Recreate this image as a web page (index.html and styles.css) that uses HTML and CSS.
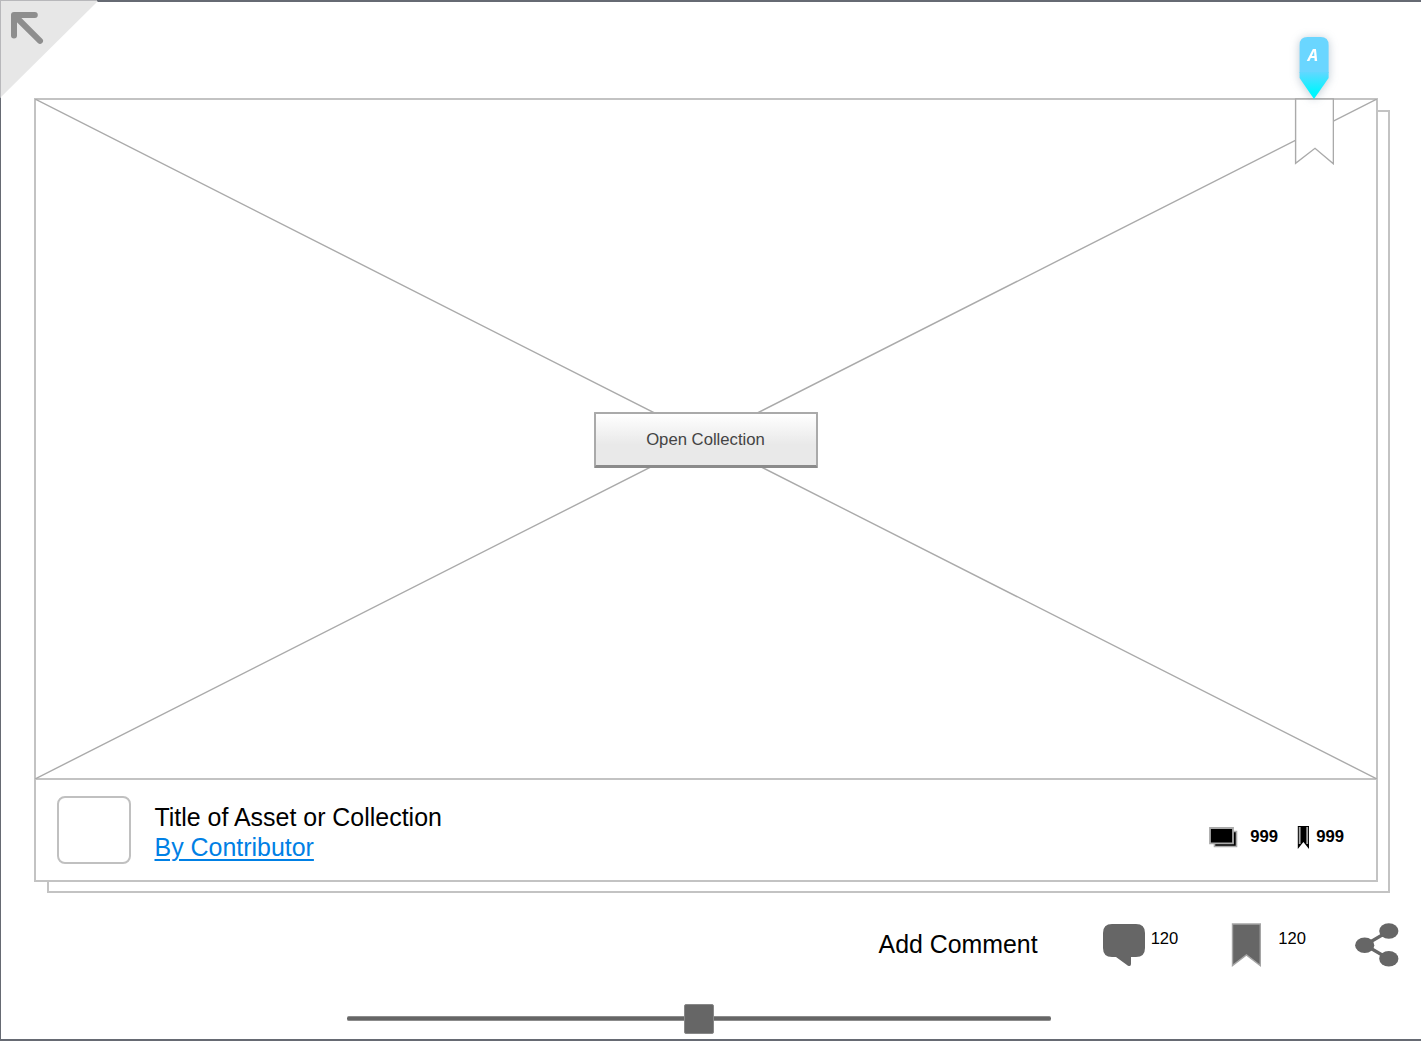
FILE: index.html
```html
<!DOCTYPE html>
<html lang="en">
<head>
  <meta charset="UTF-8">
  <meta name="viewport" content="width=device-width, initial-scale=1.0">
  <title>Collection</title>
  <link rel="stylesheet" href="styles.css">
</head>
<body>
  <div class="page">
    <a class="corner" href="#" aria-label="Back">
      <svg width="98" height="98" viewBox="0 0 98 98">
        <path d="M0 1H98L0 98Z" fill="#e7e7e7"/>
        <path d="M0 .5H97M.5 0V97" stroke="#b8b8bb" fill="none"/>
        <path d="M34.8 15H14V35.5M15 16L40 40.8" stroke="#8e8e8e" stroke-width="6" stroke-linecap="round" stroke-linejoin="round" fill="none"/>
      </svg>
    </a>

    <div class="stack">
      <div class="card">
        <div class="media">
          <svg class="cross" viewBox="0 0 1342 680" preserveAspectRatio="none">
            <path d="M0 0L1342 680M0 680L1342 0"/>
          </svg>
          <button>Open Collection</button>
          <svg class="ribbon" width="40" height="67" viewBox="0 0 40 67">
            <path d="M1.6 1H39.4V65.8L21 50.3L1.6 65.3Z" fill="#fff" stroke="#aaa" stroke-width="1.4"/>
          </svg>
          <div class="pin">
            <svg width="30" height="62" viewBox="0 0 30 62">
              <defs>
                <linearGradient id="tip" x1="0" y1="0" x2="0" y2="1">
                  <stop offset="0" stop-color="#62d8ff"/>
                  <stop offset=".75" stop-color="#00f6ff"/>
                </linearGradient>
              </defs>
              <path d="M.6 8Q.6 0 8.6 0H21.6Q29.6 0 29.6 8V36H.6Z" fill="#6ad6ff"/>
              <path d="M.6 35H29.6V41L15 62L.6 41Z" fill="url(#tip)"/>
            </svg>
            <span>A</span>
          </div>
        </div>

        <div class="info">
          <div class="thumb"></div>
          <div class="titles">
            <div class="title">Title of Asset or Collection</div>
            <a class="by" href="#">By Contributor</a>
          </div>
          <div class="stats">
            <svg width="29" height="21" viewBox="0 0 29 21">
              <path d="M5.5 4.5H27.5V19.5H5.5Z" fill="#000" stroke="#aaa" stroke-width="1.6"/>
              <path d="M1 1H24V16.3H1Z" fill="#000" stroke="#aaa" stroke-width="1.8"/>
            </svg>
            <span class="items">999</span>
            <svg width="12" height="23" viewBox="0 0 12 23">
              <path d="M.8 0H12V23L6.4 16L.8 23Z" fill="#000"/>
              <path d="M2.7 1V18M10.2 1V18" stroke="#aaa" stroke-width="1.8"/>
            </svg>
            <span class="saves">999</span>
          </div>
        </div>
      </div>
    </div>

    <div class="actions">
      <span class="add">Add Comment</span>
      <svg class="comment" width="42" height="43" viewBox="0 0 42 43">
        <path d="M9 0H33Q42 0 42 9V24Q42 33 33 33H28V40Q28 43 25 41.7L13 33H9Q0 33 0 24V9Q0 0 9 0Z" fill="#666"/>
      </svg>
      <span class="count">120</span>
      <svg class="bookmark" width="30" height="45" viewBox="0 0 30 45">
        <path d="M1.5 1H29.3V42.5L15.4 32L1.5 42.5Z" fill="#666" stroke="#a5a5a5" stroke-width="1.4"/>
      </svg>
      <span class="count">120</span>
      <svg class="share" width="44" height="44" viewBox="0 0 44 44">
        <path d="M34 8L10 22L34 36" fill="none" stroke="#666" stroke-width="3.2"/>
        <g fill="#666">
          <ellipse cx="9.7" cy="22.2" rx="9.6" ry="7.7"/>
          <ellipse cx="33.8" cy="8" rx="9.6" ry="7.7"/>
          <ellipse cx="33.8" cy="35.8" rx="9.6" ry="7.7"/>
        </g>
      </svg>
    </div>

    <div class="slider">
      <div class="knob"></div>
    </div>
  </div>
</body>
</html>
```

FILE: styles.css
```css
* {
  box-sizing: border-box;
}
body {
  margin: 0;
  background: #fff;
  color: #000;
  font-family: "Liberation Sans", Arial, sans-serif;
  overflow: hidden;
}
svg {
  display: block;
  flex: none;
}
.page {
  position: relative;
  height: 1041px;
  padding: 96px 31px 0 33px;
  border: solid #666a73;
  border-width: 2px 0 2px 1px;
}
.corner {
  position: absolute;
  top: -2px;
  left: -1px;
}

/* card with a second one peeking out behind */
.stack {
  position: relative;
  height: 795px;
  padding-right: 12px;
}
.stack::before {
  content: "";
  position: absolute;
  top: 12px;
  left: 13px;
  right: 0;
  bottom: 0;
  border: 2px solid #c3c3c3;
}
.card {
  position: relative;
  height: 784px;
  background: #fff;
  border: 2px solid #c3c3c3;
}
.media {
  position: relative;
  display: flex;
  align-items: center;
  justify-content: center;
  height: 680px;
  border-bottom: 2px solid #c3c3c3;
}
.cross {
  position: absolute;
  top: -1px;
  left: -1px;
  width: 1342px;
  height: 680px;
}
.cross path {
  stroke: #aaa;
  stroke-width: 1.4;
}
button {
  position: relative;
  width: 224px;
  height: 56px;
  margin-top: 2px;
  padding: 0 1px 0 0;
  border: 2px solid #aaa;
  border-bottom: 3px solid #8b8b8b;
  border-radius: 1px;
  background: linear-gradient(#fff, #e9e9e9 60%);
  color: #444;
  font-family: inherit;
  font-size: 16.7px;
}
.ribbon {
  position: absolute;
  top: -2px;
  right: 42px;
}
.pin {
  position: absolute;
  top: -63px;
  right: 47px;
  width: 30px;
  height: 62px;
  filter: drop-shadow(0 1px 5px rgba(70, 100, 130, 0.35));
}
.pin span {
  position: absolute;
  top: 9px;
  left: 0;
  width: 28px;
  color: #fff;
  font-family: "Open Sans", sans-serif;
  font-size: 16.5px;
  line-height: 18px;
  font-weight: bold;
  font-style: italic;
  text-align: center;
}

.info {
  display: flex;
  align-items: center;
  height: 100px;
  padding: 0 32px 0 21px;
}
.thumb {
  width: 74px;
  height: 68px;
  border: 2px solid #c0c0c0;
  border-radius: 8px;
}
.titles {
  margin-left: 23.5px;
  padding-top: 3px;
  font-size: 24.95px;
  line-height: 30px;
}
.by {
  color: #0080e5;
  text-underline-offset: 3px;
  text-decoration-thickness: 2px;
}
.stats {
  display: flex;
  align-items: center;
  margin-left: auto;
  padding-top: 14px;
  font-size: 16.7px;
  font-weight: bold;
}
.items {
  margin: 0 19px 0 12px;
}
.saves {
  margin-left: 7px;
}

.actions {
  display: flex;
  align-items: center;
  height: 44px;
  margin-top: 30px;
  margin-right: -9px;
  justify-content: flex-end;
}
.add {
  margin: -2px 65px 0 0;
  font-size: 24.9px;
}
.count {
  margin-top: -12px;
  font-size: 16.6px;
}
.comment {
  margin-right: 6px;
}
.bookmark {
  margin: 0 17px 0 53px;
}
.share {
  margin-left: 49px;
}

.slider {
  display: flex;
  align-items: center;
  justify-content: center;
  width: 704px;
  height: 5px;
  margin: 49px 0 0 313px;
  background: #666;
  border: solid #8c8c8c;
  border-width: 1px 0;
  border-radius: 2px;
}
.knob {
  flex: none;
  width: 30px;
  height: 30px;
  background: #666;
  border: 1px solid #888;
  border-radius: 2px;
}
```
